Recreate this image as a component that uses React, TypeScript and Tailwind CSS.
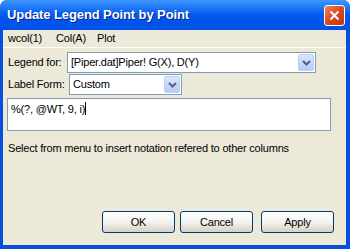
import React from 'react'

const font = { fontFamily: '"Liberation Sans", Arial, sans-serif' }

function Chevron() {
  return (
    <svg width="9" height="6" viewBox="0 0 9 6" fill="none" stroke="#4d6185" strokeWidth="2">
      <path d="M1 1 L4.5 4.5 L8 1" />
    </svg>
  )
}

function DropButton() {
  return (
    <div className="ml-auto flex h-[17px] w-[16px] shrink-0 items-center justify-center rounded-[2px] border border-[#b9cdf6] bg-gradient-to-b from-[#dbe6fd] to-[#b6cbf7]">
      <Chevron />
    </div>
  )
}

function Combo({ text, className }: { text: string; className: string }) {
  return (
    <div className={`flex h-[21px] items-center border border-[#7f9db9] bg-white pl-[3px] pr-[1px] ${className}`}>
      <span className="truncate whitespace-nowrap text-black">{text}</span>
      <DropButton />
    </div>
  )
}

function XPButton({ label, className }: { label: string; className?: string }) {
  return (
    <button
      className={`flex h-[22px] w-[73px] items-center justify-center rounded-[3px] border border-[#003c74] bg-gradient-to-b from-[#ffffff] via-[#f4f3ee] to-[#d6d0c5] text-black ${className ?? ''}`}
    >
      {label}
    </button>
  )
}

export default function App() {
  return (
    <div className="h-[249px] w-[350px] overflow-hidden" style={font}>
      <div className="flex h-full w-full flex-col rounded-t-[7px] bg-[#0a4fdc]">
        {/* caption */}
        <div className="flex h-[30px] shrink-0 items-center rounded-t-[7px] bg-gradient-to-b from-[#3d95ff] via-[#0058ee] to-[#0050e6] pl-[7px] pr-[5px]">
          <span className="text-[13px] font-bold tracking-[-0.1px] text-white [text-shadow:1px_1px_0_#0a1e8c]">
            Update Legend Point by Point
          </span>
          <div className="ml-auto flex h-[21px] w-[21px] items-center justify-center rounded-[3px] border border-white bg-gradient-to-br from-[#e9865f] via-[#d9491c] to-[#c2360e]">
            <svg width="11" height="11" viewBox="0 0 11 11" stroke="white" strokeWidth="2">
              <path d="M1.5 1.5 L9.5 9.5 M9.5 1.5 L1.5 9.5" />
            </svg>
          </div>
        </div>

        <div className="mb-[4px] ml-[3px] mr-[4px] flex flex-1 flex-col bg-[#ece9d8] text-[11px] tracking-[-0.2px] text-black">
          {/* menu */}
          <div className="flex h-[18px] items-center whitespace-nowrap border-b border-white pl-[5px]">
            <span className="w-[48px]">wcol(1)</span>
            <span className="w-[41px]">Col(A)</span>
            <span>Plot</span>
          </div>

          <div className="mt-[4px] flex items-center pl-[5px]">
            <span className="w-[59px] whitespace-nowrap">Legend for:</span>
            <Combo text="[Piper.dat]Piper! G(X), D(Y)" className="w-[249px]" />
          </div>
          <div className="mt-[1px] flex items-center pl-[5px]">
            <span className="w-[61px] whitespace-nowrap">Label Form:</span>
            <Combo text="Custom" className="w-[113px]" />
          </div>

          <div className="ml-[4px] mt-[3px] h-[33px] w-[324px] border border-[#7f9db9] bg-white px-[3px] pt-[1px]">
            %(?, @WT, 9, i)<span className="inline-block h-[13px] w-px translate-y-[2px] bg-black" />
          </div>

          <p className="ml-[5px] mt-[9px] whitespace-nowrap">Select from menu to insert notation refered to other columns</p>

          <div className="mt-auto mb-[12px] flex pl-[99px]">
            <XPButton label="OK" />
            <XPButton label="Cancel" className="ml-[5px]" />
            <XPButton label="Apply" className="ml-[8px]" />
          </div>
        </div>
      </div>
    </div>
  )
}
